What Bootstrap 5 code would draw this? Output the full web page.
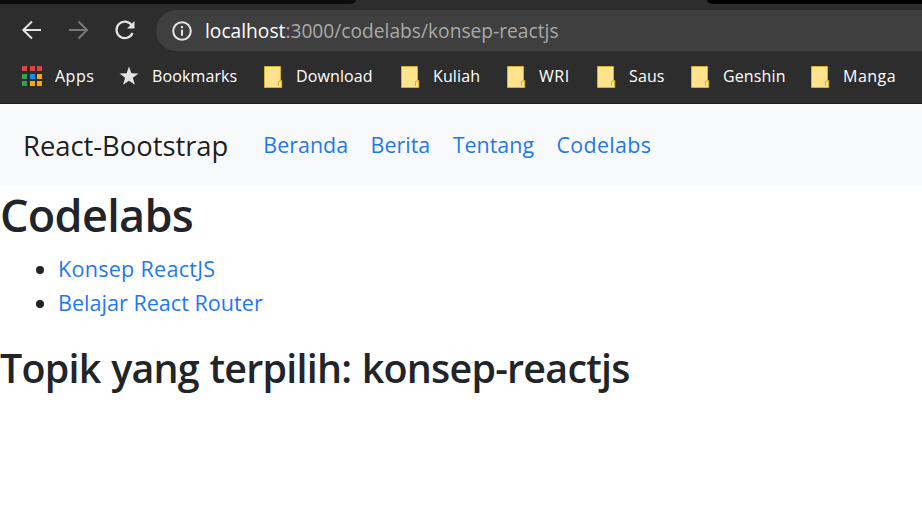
<!DOCTYPE html>
<html lang="id">
<head>
<meta charset="utf-8">
<meta name="viewport" content="width=device-width, initial-scale=1">
<title>Codelabs</title>
<link href="https://cdn.jsdelivr.net/npm/bootstrap@5.3.0/dist/css/bootstrap.min.css" rel="stylesheet">
<style>
body{font-family:"Open Sans","Noto Sans",sans-serif;color:#212529;height:508px;overflow:hidden;background:#fff}
.browser{background:#2d2d2d;height:104px;border-bottom:1px solid #201c1e;overflow:hidden}
.tabstrip{height:4px;background:#2d2d2d}
.tab-left{width:356px;background:#0c0c0c;border-radius:0 0 6px 0/0 0 4px 0}
.tab-right{width:215px;background:#000;border-radius:0 0 0 6px/0 0 0 4px}
.toolbar{height:53px;padding-left:20px}
.nav-icon{margin-left:22.5px}
.omnibox{height:41px;background:#3f3f3f;border-radius:21px 0 0 21px;margin-left:19px;padding-left:15px;font-size:19.2px;color:#a9a9a9}
.omnibox b{font-weight:400;color:#fff}
.omnibox svg{margin-right:12px}
.omnibox span{padding-top:1px}
.bookmarks{display:grid;grid-template-columns:97px 145px 137px 106px 90px 94px 120px 1fr;height:39px;padding-left:22px;font-size:16px;letter-spacing:.12px;color:#fff}
.bookmarks svg{flex:none;margin-right:12px}
.bookmarks span{padding-bottom:2px}
.bookmarks .bm-wide{letter-spacing:.5px}
.site-nav{height:81px;background:#f8f9fa;padding:0 0 0 23px}
.site-nav .navbar-brand{font-size:27.4px;color:rgba(0,0,0,.9);margin-right:35px;padding:2px 0 0;letter-spacing:-.02px}
.site-nav .nav-link{padding:2px 0 0;margin-right:22.4px;font-size:21.4px;letter-spacing:.04px}
.site-nav .nav-link:last-child{letter-spacing:.35px}
.page-link-text,.site-nav .nav-link{color:#1f78f0;text-decoration:none}
h1,h2{font-weight:600;line-height:1.2;white-space:nowrap}
h1{font-size:45px;letter-spacing:-.7px;margin:3px 0 0}
h2{font-size:39.4px;letter-spacing:-.76px;word-spacing:1.1px;margin:25px 0 0}
.topics{font-size:21.6px;line-height:34px;padding-left:58px;margin:10px 0 0}
.topics li:first-child{letter-spacing:.25px}
</style>
</head>
<body>
<header class="browser">
  <div class="tabstrip d-flex justify-content-between"><div class="tab-left"></div><div class="tab-right"></div></div>
  <div class="toolbar d-flex align-items-center">
    <svg width="24" height="24" viewBox="0 0 24 24" fill="none" stroke="#e4e4e4" stroke-width="2"><path d="M21 11H3.500M12 2.500 3.300 11l8.700 8.500"/></svg>
    <svg class="nav-icon" width="24" height="24" viewBox="0 0 24 24" fill="none" stroke="#777" stroke-width="2"><path d="M2 11h17.500M11.500 2.500 20 11l-8.500 8.500"/></svg>
    <svg class="nav-icon" width="24" height="24" viewBox="0 0 24 24"><path d="M18.700 6.200A8.300 8.300 0 1 0 19.500 14" fill="none" stroke="#e4e4e4" stroke-width="2.200"/><path d="M21.500 2v7.500H14z" fill="#e4e4e4"/></svg>
    <div class="omnibox d-flex align-items-center flex-grow-1">
      <svg width="22" height="22" viewBox="0 0 22 22"><circle cx="11" cy="11" r="8.800" fill="none" stroke="#e4e4e4" stroke-width="2"/><path d="M11 6v2.200M11 9.800v6" stroke="#e4e4e4" stroke-width="2"/></svg>
      <span><b>localhost</b>:3000/codelabs/konsep-reactjs</span>
    </div>
  </div>
  <nav class="bookmarks align-items-center">
    <div class="d-flex align-items-center"><svg width="21" height="21" viewBox="0 0 21 21"><path fill="#df4440" d="M0 0h5v5H0zM8 0h5v5H8zM15 0h5v5h-5z"/><path fill="#34a053" d="M0 8h5v5H0zM0 15h5v5H0z"/><path fill="#1a8cf0" d="M8 8h5v5H8z"/><path fill="#f7a811" d="M15 8h5v5h-5zM8 15h5v5H8zM15 15h5v5h-5z"/></svg><span class="bm-wide">Apps</span></div>
    <div class="d-flex align-items-center"><svg width="21" height="21" viewBox="0 0 21 21"><path fill="#e4e4e4" d="m10 .5 2.400 6.700 7.100.2-5.600 4.400 2 6.900-5.900-4-5.900 4 2-6.900L.5 7.400l7.100-.2z"/></svg><span>Bookmarks</span></div>
    <div class="d-flex align-items-center"><svg width="20" height="22"><use href="#folder"/></svg><span>Download</span></div>
    <div class="d-flex align-items-center"><svg width="20" height="22"><use href="#folder"/></svg><span>Kuliah</span></div>
    <div class="d-flex align-items-center"><svg width="20" height="22"><use href="#folder"/></svg><span class="bm-wide">WRI</span></div>
    <div class="d-flex align-items-center"><svg width="20" height="22"><use href="#folder"/></svg><span>Saus</span></div>
    <div class="d-flex align-items-center"><svg width="20" height="22"><use href="#folder"/></svg><span>Genshin</span></div>
    <div class="d-flex align-items-center"><svg width="20" height="22"><use href="#folder"/></svg><span class="bm-wide">Manga</span></div>
  </nav>
</header>
<svg class="d-none"><symbol id="folder" viewBox="0 0 20 22"><path d="M.5.500h16V14.500h1.200v7H.5z" fill="#ffe48d" stroke="#d9b02c"/><path d="M14.500 20v-5H17" fill="none" stroke="#d9b02c"/></symbol></svg>
<nav class="navbar site-nav flex-nowrap justify-content-start">
  <a class="navbar-brand" href="#">React-Bootstrap</a>
  <div class="navbar-nav flex-row"><a class="nav-link" href="#">Beranda</a><a class="nav-link" href="#">Berita</a><a class="nav-link" href="#">Tentang</a><a class="nav-link" href="#">Codelabs</a></div>
</nav>
<main>
  <h1>Codelabs</h1>
  <ul class="topics">
    <li><a class="page-link-text" href="#">Konsep ReactJS</a></li>
    <li><a class="page-link-text" href="#">Belajar React Router</a></li>
  </ul>
  <h2>Topik yang terpilih: konsep-reactjs</h2>
</main>
<script src="https://cdn.jsdelivr.net/npm/bootstrap@5.3.0/dist/js/bootstrap.bundle.min.js"></script>
</body>
</html>
